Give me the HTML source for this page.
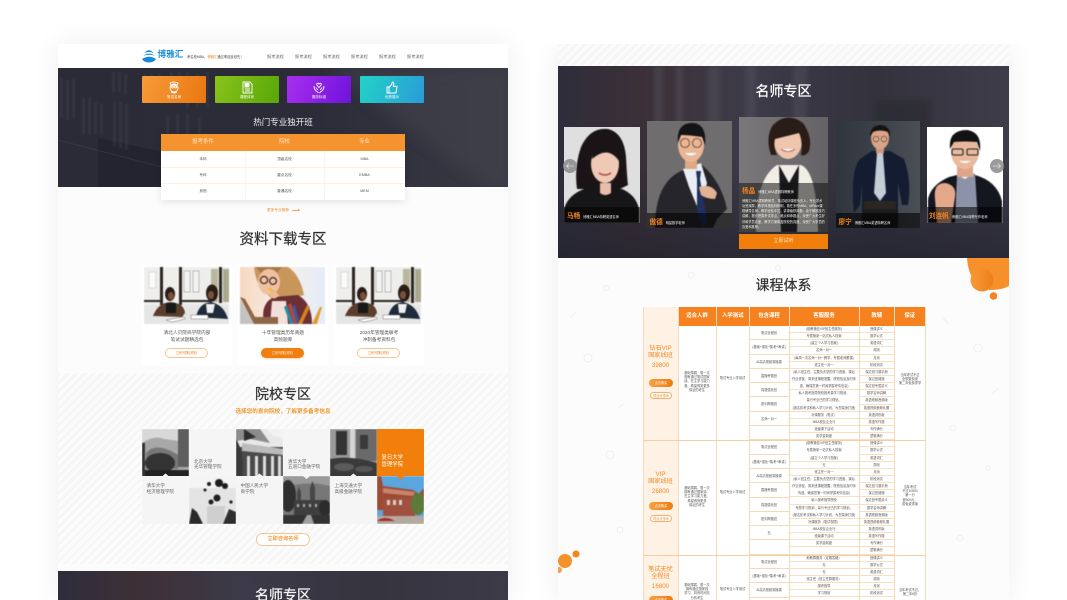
<!DOCTYPE html>
<html lang="zh"><head><meta charset="utf-8"><title>博雅汇</title>
<style>
*{margin:0;padding:0;box-sizing:border-box}
html,body{width:1067px;height:600px;overflow:hidden;background:#fff;font-family:"Liberation Sans","Noto Sans CJK SC",sans-serif;color:#333}
#w{position:relative;width:1067px;height:600px;overflow:hidden;background:#fff;filter:blur(.25px)}
.a{position:absolute;white-space:nowrap}
.c{text-align:center}
svg{position:absolute;display:block}
.ttl{-webkit-text-stroke:.25px currentColor}
.stripe{background:repeating-linear-gradient(135deg,#f6f6f6 0,#f6f6f6 3px,#fcfcfc 3px,#fcfcfc 6px)}
.col{position:absolute;top:326px}
.col div{height:7.15px;line-height:7px;font-size:3.2px;text-align:center;color:#555;white-space:nowrap;overflow:hidden;border-bottom:.5px solid #f8dfc3}
.c4 div{height:14.3px;line-height:14px;border-bottom:1px solid #f6d9b8}
.v{position:absolute;top:307px;width:1px;height:293px;background:#f6d9b8}
.h{position:absolute;left:643px;width:282px;height:1px;background:#f3cfa6}
.th{position:absolute;top:307px;height:19px;line-height:18px;background:#f5821f;color:#fff;font-size:5.4px;font-weight:bold;text-align:center}
.tag{position:absolute;text-align:center;font-size:6.2px;color:#ef8a2a;line-height:8px;white-space:nowrap}
.b1,.b2{position:absolute;left:649px;width:24px;border-radius:5px;text-align:center;font-size:3.2px;white-space:nowrap}
.b1{height:8px;line-height:8px;background:linear-gradient(90deg,#f9a03f,#ee7b12);color:#fff}
.b2{left:650px;width:22px;height:7px;line-height:6px;background:#fff;border:.6px solid #f3b06d;color:#ee8a2a}
.mid{position:absolute;text-align:center;font-size:3.2px;line-height:4.2px;color:#555}
.cell{position:absolute;width:47px;height:47.5px;background:#f5f5f5;font-size:4.6px;line-height:5.8px;color:#666;white-space:nowrap}
.ci{position:absolute;width:47px;height:47.5px;overflow:hidden}
.ci svg,.ph svg,.card svg{filter:blur(.45px)}
.tbar{position:absolute;left:0;right:0;bottom:0;background:rgba(0,0,0,.55);color:#fff;white-space:nowrap}
.tn{color:#f5821f;font-size:6.6px;font-weight:bold}
.td{font-size:3.2px;color:#eee;margin-left:3px}
.ph{position:absolute;overflow:hidden}
.card{position:absolute;top:265px;width:90px;height:100px;background:#fff}
.card p{position:absolute;left:0;width:100%;text-align:center;font-size:4.7px;line-height:7.4px;top:63.5px;color:#555}
.btn{position:absolute;left:23px;top:83px;width:43px;height:10px;border-radius:5px;border:.7px solid #f3c594;background:#fff;color:#ee8a2a;font-size:3.6px;line-height:8.5px;text-align:center}
.ib{position:absolute;top:76px;width:64px;height:27px;border-radius:1px;color:#fff;font-size:3.6px;text-align:center}
.ib span{position:absolute;left:0;right:0;top:19px;line-height:5px}
</style></head>
<body>
<div id="w">

<!-- LEFT PANEL -->
<div class="a" style="left:58px;top:44px;width:450px;height:556px;background:#fcfcfc;box-shadow:0 0 28px rgba(0,0,0,.07)"></div>
<div class="a" style="left:58px;top:44px;width:450px;height:24px;background:#fff"></div>
<svg style="left:142px;top:49px" width="14" height="14" viewBox="0 0 14 14">
<path d="M2.5 4 Q7 -1.5 11.5 4 Q7 2 2.5 4Z" fill="#1689dc"/><path d="M1.2 6.8 Q7 2.5 12.8 6.8 Q7 4.6 1.2 6.8Z" fill="#1689dc"/><path d="M0 10 Q7 5.5 14 10 Q12 13.5 7 13.5 Q2 13.5 0 10Z" fill="#1689dc"/></svg>
<div class="a" style="left:157.5px;top:48px;font-size:8.6px;line-height:12px;font-weight:bold;color:#1b8bdc">博雅汇</div>
<div class="a" style="left:187px;top:55px;font-size:3.3px;line-height:5px;color:#444">考名校MBA，<span style="color:#ef7f16">博雅汇</span>通过率遥遥领先！</div>
<div class="a" style="left:267px;top:53.5px;font-size:4.2px;line-height:5px;color:#666">报考流程</div>
<div class="a" style="left:295px;top:53.5px;font-size:4.2px;line-height:5px;color:#666">报考流程</div>
<div class="a" style="left:323px;top:53.5px;font-size:4.2px;line-height:5px;color:#666">报考流程</div>
<div class="a" style="left:351px;top:53.5px;font-size:4.2px;line-height:5px;color:#666">报考流程</div>
<div class="a" style="left:379px;top:53.5px;font-size:4.2px;line-height:5px;color:#666">报考流程</div>
<div class="a" style="left:407px;top:53.5px;font-size:4.2px;line-height:5px;color:#666">报考流程</div>

<!-- hero -->
<svg style="left:58px;top:68px" width="450" height="119" viewBox="0 0 450 119">
<defs><linearGradient id="hg" x1="0" y1="0" x2="1" y2="0"><stop offset="0" stop-color="#2b2b38"/><stop offset=".55" stop-color="#2c2c39"/><stop offset="1" stop-color="#393944"/></linearGradient>
<filter id="bl"><feGaussianBlur stdDeviation=".8"/></filter><filter id="bl2"><feGaussianBlur stdDeviation="7"/></filter></defs>
<rect width="450" height="119" fill="url(#hg)"/>
<path d="M270 0 L450 0 L450 119 L430 119 Z" fill="#45454f" opacity=".5" filter="url(#bl2)"/>
<path d="M40 70 L270 119 L40 119Z" fill="#23232f" opacity=".8"/>
<g fill="#5a5a66" opacity=".2" filter="url(#bl)">
<rect x="2" y="10" width="3" height="40"/><rect x="8" y="12" width="3" height="40"/><rect x="14" y="10" width="3" height="40"/>
<rect x="24" y="30" width="3" height="36"/><rect x="30" y="30" width="3" height="36"/><rect x="36" y="34" width="3" height="32"/><rect x="42" y="36" width="3" height="30"/>
<rect x="54" y="4" width="3" height="20"/><rect x="60" y="4" width="3" height="20"/><rect x="66" y="6" width="3" height="20"/><rect x="55" y="34" width="3" height="44"/><rect x="61" y="34" width="3" height="46"/><rect x="67" y="36" width="3" height="46"/>
<rect x="86" y="6" width="3" height="26"/><rect x="92" y="6" width="3" height="26"/><rect x="100" y="6" width="3" height="26"/><rect x="112" y="4" width="3" height="30"/><rect x="120" y="4" width="3" height="32"/><rect x="128" y="4" width="3" height="36"/><rect x="138" y="6" width="3" height="34"/><rect x="148" y="4" width="3" height="36"/>
<rect x="108" y="48" width="3" height="24"/><rect x="118" y="46" width="3" height="24"/><rect x="128" y="46" width="3" height="26"/><rect x="140" y="50" width="3" height="24"/>
</g>
<path d="M0 72 L180 119" stroke="#4a4a56" stroke-width="1" opacity=".4"/>
</svg>
<div class="ib" style="left:142px;background:linear-gradient(110deg,#f69b3a,#ea770f)"><span>笔试名师</span></div>
<div class="ib" style="left:215px;background:linear-gradient(110deg,#8ac21b,#58a70a)"><span>课程体系</span></div>
<div class="ib" style="left:287px;background:linear-gradient(110deg,#a82fee,#6f12dc)"><span>服务标准</span></div>
<div class="ib" style="left:360px;background:linear-gradient(110deg,#22d3c6,#2a9bd9)"><span>优势展示</span></div>
<svg style="left:168px;top:81px" width="12" height="13" viewBox="0 0 12 13" fill="none" stroke="#fff" stroke-width=".9"><path d="M2 2 L6 1 L10 2 L9 4 H3Z"/><circle cx="6" cy="7" r="4"/><circle cx="4.4" cy="6" r="1"/><circle cx="7.6" cy="6" r="1"/><path d="M3 11 Q6 13 9 11"/></svg>
<svg style="left:241.5px;top:81px" width="11" height="13" viewBox="0 0 11 13" fill="none" stroke="#fff" stroke-width=".9"><path d="M1 1 H8 L10 3 V12 H1Z"/><rect x="3" y="2.5" width="4" height="3.5" fill="#fff"/><path d="M3 8 H8 M3 10 H8"/></svg>
<svg style="left:313px;top:81px" width="12" height="13" viewBox="0 0 12 13" fill="none" stroke="#fff" stroke-width=".9"><path d="M6 6.5 L3.8 4 Q3.4 2.4 4.8 2.2 Q5.7 2.2 6 3 Q6.3 2.2 7.2 2.2 Q8.6 2.4 8.2 4Z"/><path d="M1 5 Q1 9 4 10.5 L5.5 12 M11 5 Q11 9 8 10.5 L6.5 12"/><path d="M2.8 6.5 L5 9 M9.2 6.5 L7 9"/></svg>
<svg style="left:386px;top:80.5px" width="12" height="13" viewBox="0 0 12 13" fill="none" stroke="#fff" stroke-width="1"><path d="M1 6 H3 V12 H1Z"/><path d="M3 6.4 L5.6 3.6 L6.4 1 Q8 1 7.8 3.2 L7.4 5.4 H11 L10 12 H3"/></svg>

<div class="a c" style="left:161px;width:244px;top:116px;font-size:8.5px;line-height:12px;color:#eee">热门专业独开班</div>
<div class="a" style="left:161px;top:134px;width:244px;height:66px;background:#fff;box-shadow:0 2px 8px rgba(0,0,0,.1)"></div>
<div class="a" style="left:161px;top:134px;width:244px;height:17px;background:#f5942f"></div>
<div class="a c" style="left:161px;width:84px;top:134px;line-height:16px;font-size:5.4px;color:#fce3c6">报考条件</div>
<div class="a c" style="left:245px;width:79px;top:134px;line-height:16px;font-size:5.4px;color:#fce3c6">院校</div>
<div class="a c" style="left:324px;width:81px;top:134px;line-height:16px;font-size:5.4px;color:#fce3c6">专业</div>
<div class="a" style="left:245px;top:151px;width:1px;height:49px;background:#fdf4ea"></div>
<div class="a" style="left:324px;top:151px;width:1px;height:49px;background:#fdf4ea"></div>
<div class="a" style="left:161px;top:167px;width:244px;height:1px;background:#fdf0e2"></div>
<div class="a" style="left:161px;top:183px;width:244px;height:1px;background:#fdf0e2"></div>
<div class="a c" style="left:161px;width:84px;top:157px;font-size:3.7px;line-height:5px;color:#555">本科</div>
<div class="a c" style="left:245px;width:79px;top:157px;font-size:3.7px;line-height:5px;color:#555">顶级名校</div>
<div class="a c" style="left:324px;width:81px;top:157px;font-size:3.7px;line-height:5px;color:#555">MBA</div>
<div class="a c" style="left:161px;width:84px;top:173px;font-size:3.7px;line-height:5px;color:#555">专科</div>
<div class="a c" style="left:245px;width:79px;top:173px;font-size:3.7px;line-height:5px;color:#555">重点名校</div>
<div class="a c" style="left:324px;width:81px;top:173px;font-size:3.7px;line-height:5px;color:#555">EMBA</div>
<div class="a c" style="left:161px;width:84px;top:189px;font-size:3.7px;line-height:5px;color:#555">其他</div>
<div class="a c" style="left:245px;width:79px;top:189px;font-size:3.7px;line-height:5px;color:#555">普通名校</div>
<div class="a c" style="left:324px;width:81px;top:189px;font-size:3.7px;line-height:5px;color:#555">MEM</div>
<div class="a" style="left:267px;top:207.5px;font-size:3.7px;line-height:5px;color:#ef8a2a">更多专业推荐</div>
<svg style="left:291px;top:208px" width="10" height="5" viewBox="0 0 10 5" fill="none" stroke="#ef8a2a" stroke-width=".7"><path d="M1 2.5 H8.5 M7 1 L8.7 2.5"/></svg>

<!-- downloads -->
<div class="a c ttl" style="left:58px;width:450px;top:230px;font-size:14.5px;line-height:20px;color:#333">资料下载专区</div>

<svg width="0" height="0" style="position:absolute"><defs>
<symbol id="meet" viewBox="0 0 85 57">
<rect width="85" height="57" fill="#eeeeec"/>
<rect x="5" y="5" width="7" height="16" fill="#fafafa" stroke="#bbb" stroke-width=".5"/>
<rect x="16" y="0" width="3" height="38" fill="#2b2723"/><rect x="35" y="0" width="3" height="38" fill="#2b2723"/>
<rect x="40" y="4" width="6" height="21" fill="#f3f3f3" stroke="#888" stroke-width=".5"/><rect x="49" y="4" width="6" height="21" fill="#f3f3f3" stroke="#888" stroke-width=".5"/>
<rect x="75" y="0" width="3" height="36" fill="#2b2723"/>
<rect x="67" y="2" width="7" height="33" fill="#b9b79c"/><rect x="79" y="2" width="6" height="33" fill="#a9a98e"/>
<rect x="0" y="33" width="16" height="2" fill="#2b2723"/><rect x="38" y="33" width="30" height="2" fill="#2b2723"/>
<path d="M0 38 H85 V57 H0Z" fill="#e6e6e6"/>
<ellipse cx="26" cy="27" rx="5" ry="7" fill="#2a1c16"/><ellipse cx="27" cy="29" rx="3" ry="4" fill="#7a5238"/>
<path d="M9 49 Q14 36 26 35 Q40 36 41 46 L38 50Z" fill="#5a3d2b"/><path d="M22 36 H32 V46 H22Z" fill="#181818"/>
<ellipse cx="68" cy="26" rx="6" ry="8.5" fill="#2a1c16"/><ellipse cx="67" cy="28" rx="3" ry="4" fill="#7a5238"/>
<path d="M52 50 Q55 36 67 35 Q80 38 84 52Z" fill="#1f2b3a"/><path d="M62 37 H71 L69 46 H63Z" fill="#eee"/>
<path d="M22 53 L40 50 L41 52 L28 55Z" fill="#fff" stroke="#555" stroke-width=".4"/><path d="M47 48 H64 V52 H47Z" fill="#fff" stroke="#555" stroke-width=".4"/>
</symbol>
</defs></svg>

<div class="card" style="left:142px"><svg style="left:2px;top:2px" width="85" height="57"><use href="#meet"/></svg><p>清北人贝院商学院内部<br>笔试试题精选包</p><div class="btn">立即领取资料</div></div>
<div class="card" style="left:238px">
<svg style="left:2px;top:2px" width="85" height="57" viewBox="0 0 85 57">
<defs><linearGradient id="g1" x1="0" x2="1"><stop offset="0" stop-color="#f6d8c0"/><stop offset=".5" stop-color="#f7efe8"/><stop offset="1" stop-color="#e4ecf8"/></linearGradient></defs>
<rect width="85" height="57" fill="url(#g1)"/>
<path d="M14 0 Q16 16 22 22 L36 36 Q56 30 64 28 Q60 8 48 0Z" fill="#c9965a"/>
<path d="M16 0 H42 Q38 6 32 8 L22 8Z" fill="#a87a4a"/>
<ellipse cx="29" cy="15" rx="11" ry="13" fill="#efc1a2"/>
<circle cx="24" cy="13" r="3.6" fill="none" stroke="#2a1a14" stroke-width="1.1"/><circle cx="33" cy="14" r="3.4" fill="none" stroke="#2a1a14" stroke-width="1.1"/>
<path d="M27 22 L41 33 L45 34 L30 20Z" fill="#e9c046"/>
<path d="M24 57 Q20 36 34 30 L58 28 Q72 36 72 57Z" fill="#6b2f34"/>
<path d="M32 34 H46 L48 57 H30Z" fill="#f3dfd9"/>
<ellipse cx="34" cy="28" rx="4" ry="3.5" fill="#eeb999"/>
<path d="M0 32 L14 57 H0Z" fill="#c3c3c3"/><path d="M5 32 L15 50 H38 V57 H14 L0 30Z" fill="#8f6647"/>
<path d="M47 38 L54 57 H50 L44 40Z" fill="#2c8a9e"/><path d="M51 36 L58 57 H54 L48 38Z" fill="#c04242"/><path d="M55 38 L60 57 H57 L52 40Z" fill="#355da2"/><path d="M70 40 L62 57 H58 L67 38Z" fill="#d6821e"/>
<path d="M72 57 L80 40 H82 L77 57Z" fill="#e09a2a"/>
</svg>
<p>十年管理类历年真题<br>高频题库</p><div class="btn" style="background:#f07f0f;border-color:#f07f0f;color:#fde6cc;box-shadow:0 1px 2px rgba(240,127,15,.3)">立即领取资料</div></div>
<div class="card" style="left:334px"><svg style="left:2px;top:2px" width="85" height="57"><use href="#meet"/></svg><p>2020年管理类联考<br>冲刺备考资料包</p><div class="btn">立即领取资料</div></div>

<!-- schools -->
<div class="a stripe" style="left:58px;top:373px;width:450px;height:191px"></div>
<div class="a c ttl" style="left:58px;width:450px;top:384px;font-size:14px;line-height:20px;color:#333">院校专区</div>
<div class="a c" style="left:58px;width:450px;top:408px;font-size:5.6px;line-height:8px;font-weight:bold;color:#ee9a30">选择您的意向院校，了解更多备考信息</div>

<div class="cell" style="left:189px;top:428.5px"><div class="a" style="left:5px;top:30px">北京大学<br>光华管理学院</div></div>
<div class="cell" style="left:283px;top:428.5px"><div class="a" style="left:5px;top:30px">清华大学<br>五道口金融学院</div></div>
<div class="cell" style="left:377px;top:428.5px;background:#f27f0a;color:#fff;font-size:5.4px;line-height:7px"><div class="a" style="left:4.5px;top:26.5px">复日大学<br>管理学院</div></div>
<div class="cell" style="left:142px;top:476px"><div class="a" style="left:4.5px;top:7px">清华大学<br>经济管理学院</div></div>
<div class="cell" style="left:236px;top:476px"><div class="a" style="left:4.5px;top:7px">中国人民大学<br>商学院</div></div>
<div class="cell" style="left:330px;top:476px"><div class="a" style="left:4.5px;top:7px">上海交通大学<br>高级金融学院</div></div>

<div class="ci" style="left:142px;top:428.5px"><svg width="47" height="48" viewBox="0 0 47 48"><rect width="47" height="48" fill="#a8a8a8"/><path d="M0 14 Q12 6 22 10 L36 12 V0 H0Z" fill="#d8d8d8"/><path d="M4 24 Q14 12 36 26 V40 H4Z" fill="#777"/><ellipse cx="18" cy="34" rx="15" ry="10" fill="#333"/><rect x="36" y="0" width="11" height="38" fill="#5e5e5e"/><rect y="41" width="47" height="7" fill="#222"/><path d="M0 14 H3 V48 H0Z" fill="#333"/></svg></div>
<div class="ci" style="left:236px;top:428.5px"><svg width="47" height="48" viewBox="0 0 47 48"><rect width="47" height="48" fill="#e8e8e8"/><path d="M0 0 H24 L34 14 L14 10 L0 12Z" fill="#8c8c8c"/><path d="M30 0 H47 V10 L36 6Z" fill="#f2f2f2"/><path d="M8 0 L20 8 L8 12Z" fill="#2f2f2f"/><rect y="18" width="47" height="30" fill="#4a4a4a"/><path d="M6 14 L47 20 V26 L6 22Z" fill="#bbb"/><g fill="#dcdcdc"><rect x="11" y="27" width="3" height="21"/><rect x="19" y="27" width="3" height="21"/><rect x="27" y="27" width="3" height="21"/><rect x="35" y="27" width="3" height="21"/><rect x="42" y="27" width="3" height="21"/></g><path d="M0 10 Q9 24 6 48 H0Z" fill="#3a3a3a"/></svg></div>
<div class="ci" style="left:330px;top:428.5px"><svg width="47" height="48" viewBox="0 0 47 48"><rect width="47" height="48" fill="#999"/><rect x="6" y="2" width="11" height="24" fill="#333"/><rect x="20" y="0" width="5" height="30" fill="#d5d5d5"/><path d="M26 0 H47 V32 H26Z" fill="#6a6a6a"/><rect x="30" y="6" width="8" height="14" fill="#3a3a3a"/><path d="M0 30 Q20 26 47 34 V48 H0Z" fill="#3a3a3a"/><ellipse cx="14" cy="38" rx="10" ry="4" fill="#5a5a5a"/><ellipse cx="34" cy="40" rx="9" ry="3" fill="#565656"/></svg></div>
<div class="ci" style="left:189px;top:476px"><svg width="47" height="48" viewBox="0 0 47 48"><rect width="47" height="48" fill="#e4e4e4"/><path d="M0 0 H47 V12 H0Z" fill="#f4f4f4"/><g fill="#1e1e1e"><circle cx="30" cy="7" r="4"/><circle cx="36" cy="10" r="3"/><circle cx="20" cy="8" r="2"/><circle cx="28" cy="22" r="3.5"/><circle cx="22" cy="26" r="2.5"/><circle cx="16" cy="14" r="1.5"/><circle cx="42" cy="26" r="1.6"/></g><rect x="18" y="30" width="18" height="18" fill="#cfcfcf"/><path d="M0 48 L3 32 L8 36 L14 48Z" fill="#2a2a2a"/><path d="M34 48 L40 33 L47 36 V48Z" fill="#2f2f2f"/></svg></div>
<div class="ci" style="left:283px;top:476px"><svg width="47" height="48" viewBox="0 0 47 48"><rect width="47" height="48" fill="#777"/><path d="M0 0 H47 V10 Q24 4 0 12Z" fill="#9a9a9a"/><ellipse cx="5" cy="20" rx="8" ry="16" fill="#2f2f2f"/><rect x="11" y="24" width="29" height="15" fill="#3f3f3f"/><path d="M14 24 V16 L16 11 L18 16 V24Z M27 24 V12 L29.5 5 L32 12 V24Z" fill="#474747"/><g fill="#b0b0b0"><rect x="14" y="28" width="2" height="3"/><rect x="20" y="28" width="2" height="3"/><rect x="26" y="28" width="2" height="3"/><rect x="32" y="28" width="2" height="3"/></g><ellipse cx="42" cy="32" rx="6" ry="8" fill="#2c2c2c"/><rect y="39" width="47" height="9" fill="#333"/><path d="M19 48 L24 39 H28 L31 48Z" fill="#a0a0a0"/></svg></div>
<div class="ci" style="left:377px;top:476px"><svg width="47" height="48" viewBox="0 0 47 48"><rect width="47" height="48" fill="#5aa6dd"/><path d="M0 0 H4 L6 10 L36 14 L42 18 L47 12 V34 H0Z" fill="#9e4a35"/><path d="M6 12 L38 16 L36 20 L6 17Z" fill="#c88468"/><rect x="6" y="22" width="32" height="18" fill="#a05040"/><rect x="10" y="24" width="3" height="5" fill="#d8d0c0"/><rect x="16" y="24" width="3" height="5" fill="#d8d0c0"/><rect x="22" y="24" width="3" height="5" fill="#d8d0c0"/><ellipse cx="41" cy="28" rx="7" ry="11" fill="#5c7a3a"/><rect y="40" width="47" height="8" fill="#b5a89c"/><path d="M0 45 Q8 39 18 45Z" fill="#a32a33"/></svg></div>

<svg style="left:142px;top:428px" width="282" height="100" viewBox="0 0 282 100">
<path d="M20.5 48 L23.5 45.5 L26.5 48Z M114.5 48 L117.5 45.5 L120.5 48Z M208.5 48 L211.5 45.5 L214.5 48Z" fill="#fff"/>
<path d="M67 48 L70.5 51 L74 48Z M161 48 L164.5 51 L168 48Z" fill="#f5f5f5"/>
<path d="M255 48 L258.5 52 L262 48Z" fill="#f27f0a"/>
</svg>

<div class="a c" style="left:256px;top:533px;width:54px;height:13px;border:.7px solid #f3c594;border-radius:7px;background:#fff;font-size:5.2px;line-height:11.6px;font-weight:bold;color:#eea044">立即咨询名师</div>

<svg style="left:58px;top:571px" width="450" height="29" viewBox="0 0 450 29">
<defs><linearGradient id="d2" x1="0" x2="1"><stop offset="0" stop-color="#2e2d3c"/><stop offset=".18" stop-color="#3d3036"/><stop offset=".4" stop-color="#3c3a48"/><stop offset=".7" stop-color="#35343f"/><stop offset="1" stop-color="#3c3a47"/></linearGradient></defs>
<rect width="450" height="29" fill="url(#d2)"/></svg>
<div class="a c ttl" style="left:58px;width:450px;top:585px;font-size:14px;line-height:20px;color:#f4f4f4">名师专区</div>

<!-- RIGHT PANEL -->
<div class="a" style="left:558px;top:44px;width:451px;height:556px;background:#fcfcfc;box-shadow:0 0 28px rgba(0,0,0,.07)"></div>
<div class="a" style="left:533px;top:0;width:534px;height:44px;background:#fff"></div>
<div class="a stripe" style="left:558px;top:44px;width:451px;height:22px"></div>

<svg style="left:558px;top:66px" width="451" height="192" viewBox="0 0 451 192">
<defs><linearGradient id="d3" x1="0" x2="1"><stop offset="0" stop-color="#2e2d3c"/><stop offset=".18" stop-color="#3b3036"/><stop offset=".42" stop-color="#3d3b49"/><stop offset=".7" stop-color="#33323d"/><stop offset="1" stop-color="#3e3c49"/></linearGradient>
<linearGradient id="d4" x1="0" y1="0" x2="0" y2="1"><stop offset=".5" stop-color="#23232f" stop-opacity="0"/><stop offset="1" stop-color="#23232f" stop-opacity=".75"/></linearGradient>
<filter id="bl3"><feGaussianBlur stdDeviation="2.5"/></filter></defs>
<rect width="451" height="192" fill="url(#d3)"/>
<g fill="#55535f" opacity=".45" filter="url(#bl3)"><rect x="96" y="0" width="9" height="140"/><rect x="118" y="0" width="7" height="150"/><rect x="150" y="0" width="12" height="120"/><rect x="188" y="0" width="10" height="100"/><rect x="235" y="0" width="14" height="80"/></g>
<rect x="318" y="34" width="55" height="110" fill="#2b2a33" opacity=".6" filter="url(#bl3)"/>
<rect width="451" height="192" fill="url(#d4)"/></svg>
<div class="a c ttl" style="left:558px;width:451px;top:81px;font-size:14px;line-height:20px;color:#fff">名师专区</div>

<!-- teachers -->
<div class="ph" style="left:564px;top:127px;width:76px;height:96px;background:#dfdfdf">
<svg width="76" height="96" viewBox="0 0 76 96"><path d="M0 96 V82 Q4 68 20 62 H58 Q72 68 75 82 V96Z" fill="#161619"/><path d="M13 62 Q10 40 17 20 Q26 0 44 2 Q60 6 62 30 Q63 50 64 58 L56 62 H20Z" fill="#1a1416"/><ellipse cx="41" cy="37" rx="14" ry="19" fill="#efc8b6"/><path d="M28 32 Q30 12 52 18 Q56 28 55 34 Q44 18 28 32Z" fill="#1a1416"/><path d="M36 56 H47 V66 Q41 70 36 66Z" fill="#e8bda9"/><path d="M35 46 Q41 50 47 46" stroke="#b3474c" stroke-width="1.4" fill="none"/></svg>
<div class="tbar" style="height:16px;line-height:14px;background:rgba(0,0,0,.5);padding-left:3px"><span class="tn">马畅</span><span class="td">博雅汇MBA特聘英语名师</span></div></div>

<div class="ph" style="left:647px;top:121px;width:85px;height:107px;background:#6f6d6d">
<svg width="85" height="107" viewBox="0 0 85 107"><path d="M8 107 Q8 62 34 50 L55 44 Q74 60 80 88 L70 98 L66 107Z" fill="#26262a"/><path d="M36 48 L54 42 L60 62 L52 90 L42 66Z" fill="#e8eef4"/><path d="M49 50 L54 50 L53 58 L60 100 L56 107 L50 90 L50 58Z" fill="#20305f"/><path d="M52 66 Q64 62 70 72 L68 78 Q60 78 54 74Z" fill="#e2b393"/><rect x="38" y="36" width="12" height="12" fill="#dfa988"/><ellipse cx="44" cy="24" rx="13" ry="17" fill="#e9b696"/><path d="M31 22 Q29 1 47 2 Q60 4 58 24 L55 16 Q42 14 34 14Z" fill="#141416"/><circle cx="38" cy="22" r="4.5" fill="none" stroke="#5a3a2a" stroke-width=".8"/><circle cx="50" cy="22" r="4.5" fill="none" stroke="#5a3a2a" stroke-width=".8"/><path d="M38 32 Q44 37 50 32" fill="#fff"/></svg>
<div class="tbar" style="height:15px;line-height:14px;background:rgba(0,0,0,.55);padding-left:2.5px"><span class="tn">傲德</span><span class="td">明星数学老师</span></div></div>

<div class="ph" style="left:739px;top:117px;width:89px;height:115px;background:linear-gradient(90deg,#7a787a,#646264)">
<svg width="89" height="115" viewBox="0 0 89 115"><path d="M17 115 Q16 62 38 48 H62 Q78 54 79 115Z" fill="#f1eee6"/><path d="M40 48 L50 66 L60 48 L58 115 H42Z" fill="#1a1a1e"/><ellipse cx="49" cy="24" rx="14" ry="18" fill="#efc5ad"/><path d="M32 38 Q26 20 34 8 Q48 -6 64 6 Q74 20 70 34 Q66 40 62 38 Q64 24 60 16 Q44 20 36 22 Q34 30 38 38Z" fill="#2a1c16"/><path d="M42 32 Q49 37 56 32" fill="#fff" stroke="#b84a52" stroke-width=".8"/></svg>
<div class="tbar" style="height:49px;background:rgba(20,20,20,.55);padding:1px 3px"><div style="line-height:9px"><span class="tn">杨晶</span><span class="td">博雅汇MBA逻辑特聘教师</span></div><div style="font-size:3.2px;line-height:5.3px;color:#eee;white-space:normal;margin-top:1.5px">博雅汇MBA逻辑教研员、笔试培训课程负责人，专业学术功底深厚，教学风格独特鲜明，曾任多所MBA、MPAcc课程辅导名师，教学经验丰富，讲课幽默风趣，善于解题技巧讲解，擅长把握考试重点、难点和命题点，深受广大考生好评和学员喜爱，教学方案覆盖院校的真题，深受广大学员的喜爱和推荐。</div></div></div>
<div class="a c" style="left:739px;top:234px;width:89px;height:15px;background:#f27f0a;color:#fde3c5;font-size:5px;line-height:14px">立即试听</div>

<div class="ph" style="left:836px;top:121px;width:84px;height:107px;background:linear-gradient(90deg,#2f353d,#4a4f56)">
<svg width="84" height="107" viewBox="0 0 84 107"><path d="M18 92 Q14 50 24 38 L36 30 H54 L68 38 Q76 60 72 84 L66 84 L62 62 V107 H26 V62 L24 84Z" fill="#131c30"/><path d="M41 32 L47 32 L50 72 L44 80 L38 72Z" fill="#c4ccd6"/><path d="M28 80 H60 V90 H28Z" fill="#2c2622"/><rect x="26" y="88" width="36" height="19" fill="#1c1c1e"/><rect x="40" y="26" width="8" height="6" fill="#cc9678"/><ellipse cx="44" cy="17" rx="9" ry="11.5" fill="#d9a488"/><path d="M34 16 Q34 4 45 4 Q55 5 54 16 L52 11 Q44 8 37 11Z" fill="#17120f"/><circle cx="40" cy="18" r="2.8" fill="none" stroke="#5a4030" stroke-width=".6"/><circle cx="48" cy="18" r="2.8" fill="none" stroke="#5a4030" stroke-width=".6"/></svg>
<div class="tbar" style="height:15px;line-height:14px;background:rgba(0,0,0,.6);padding-left:2.5px"><span class="tn">廖宁</span><span class="td">博雅汇MBA英语特聘名师</span></div></div>

<div class="ph" style="left:927px;top:127px;width:76px;height:96px;background:#fff">
<svg width="76" height="96" viewBox="0 0 76 96"><path d="M1 96 V72 Q4 58 22 50 L30 48 L38 58 L48 48 Q70 54 75 74 V96Z" fill="#15171f"/><path d="M30 48 L38 52 L48 46 L51 96 H28Z" fill="#8c93a8"/><path d="M8 72 Q6 56 18 56 Q30 58 28 70 L24 96 H10Z" fill="#e3a98a"/><rect x="30" y="36" width="16" height="14" fill="#dda688"/><ellipse cx="38" cy="25" rx="14" ry="17" fill="#eab99c"/><path d="M23 22 Q21 3 40 3 Q55 5 53 24 L50 15 Q38 14 27 15Z" fill="#121214"/><rect x="25" y="22" width="11" height="6" rx="1.5" fill="none" stroke="#222" stroke-width="1.1"/><rect x="40" y="22" width="11" height="6" rx="1.5" fill="none" stroke="#222" stroke-width="1.1"/><path d="M32 34 Q38 38 44 34" fill="#fff"/></svg>
<div class="tbar" style="height:16px;line-height:14px;background:rgba(0,0,0,.55);padding-left:2px"><span class="tn">刘连帆</span><span class="td">博雅汇MBA特聘写作老师</span></div></div>

<svg style="left:563px;top:159px" width="14" height="14" viewBox="0 0 14 14"><circle cx="7" cy="7" r="7" fill="#8a8a8a" fill-opacity=".85"/><path d="M11 7 H3.5 M6 4.5 L3.5 7 L6 9.5" stroke="#ddd" stroke-width=".8" fill="none"/></svg>
<svg style="left:990px;top:159px" width="14" height="14" viewBox="0 0 14 14"><circle cx="7" cy="7" r="7" fill="#8a8a8a" fill-opacity=".85"/><path d="M3 7 H10.5 M8 4.5 L10.5 7 L8 9.5" stroke="#ddd" stroke-width=".8" fill="none"/></svg>

<!-- decoration -->
<svg style="left:558px;top:258px" width="451" height="342" viewBox="0 0 451 342">
<defs><linearGradient id="og" x1="0" x2="1"><stop offset="0" stop-color="#f79a38"/><stop offset="1" stop-color="#ee7f16"/></linearGradient></defs>
<g fill="none" stroke="#ececec" stroke-width=".8"><circle cx="133" cy="17" r="3"/><circle cx="48" cy="30" r="2.5"/><circle cx="30" cy="100" r="4"/><circle cx="93" cy="210" r="2.5"/><circle cx="52" cy="197" r="4"/><circle cx="62" cy="272" r="3"/><circle cx="395" cy="170" r="3"/><circle cx="420" cy="90" r="4"/><circle cx="402" cy="280" r="3"/><circle cx="430" cy="210" r="2.5"/><circle cx="220" cy="10" r="2.5"/><path d="M12 60 L18 54 M440 130 L434 136 M60 150 L66 146 M385 60 L391 66"/></g>
<path d="M409 0 Q411 28 432 32 Q444 32 451 28 V0Z" fill="#f6902b"/>
<circle cx="424" cy="22" r="11.5" fill="url(#og)"/>
<circle cx="435.5" cy="38" r="3.8" fill="#ef8420"/>
<circle cx="7" cy="303" r="7" fill="#f6922c"/><circle cx="18" cy="296" r="3.6" fill="#f08a20"/><circle cx="1" cy="312" r="3" fill="#f3a04f"/>
</svg>

<div class="a c ttl" style="left:558px;width:451px;top:275px;font-size:14px;line-height:20px;color:#333">课程体系</div>

<!-- table -->
<div class="a" style="left:643px;top:307px;width:282px;height:293px;background:#fff"></div>
<div class="a" style="left:643px;top:307px;width:35px;height:293px;background:#fef2e4"></div>
<div class="th" style="left:678px;width:38px">适合人群</div>
<div class="th" style="left:716.5px;width:32.5px">入学测试</div>
<div class="th" style="left:749.5px;width:39px">包含课程</div>
<div class="th" style="left:789px;width:70px">客服服务</div>
<div class="th" style="left:859.5px;width:34.5px">教辅</div>
<div class="th" style="left:894.5px;width:30.5px">保证</div>

<div class="col c4" style="left:749px;width:40px">
<div>笔试全程班</div><div>(基础+强化+集考+串讲)</div><div>AI高清视频录播课</div><div>直播夸题班</div><div>真题强化班</div><div>密训押题班</div><div>名师一对一</div><div></div>
<div>笔试全程班</div><div>(基础+强化+集考+串讲)</div><div>AI高清视频录播课</div><div>直播夸题班</div><div>真题强化班</div><div>密训押题班</div><div>无</div><div></div>
<div>笔试全程班</div><div>(基础+强化+集考+串讲)</div><div>AI高清视频录播课</div>
</div>
<div class="col" style="left:789px;width:70px">
<div>(助教微信VIP班主任服务)</div><div>专属管家一站式私人档案</div><div>(建立个人学习档案)</div><div>名师一对一</div><div>(每周一次名师一对一教学，专属老师跟课)</div><div>班主任一对一</div><div style="border:0">(私人班主任，主要负责您的学习进度、课后</div><div style="border:0">作业督促、周末班课程提醒、院校信息及时传</div><div>递、确保您第一时间掌握考情信息)</div><div style="border:0">私人报考指导院校报考量学习规划、</div><div style="border:0">量行专业已的学习规划。</div><div>(报名阶考试和私人学习计划、为您量身打造)</div><div>补课服务（笔试）</div><div>MBA校友企业行</div><div>班级课下活动</div><div>奖学金制度</div>
<div style="border:0">(助教微信VIP班主任服务)</div><div style="border:0">专属管家一站式私人档案</div><div>(建立个人学习档案)</div><div>无</div><div>班主任一对一</div><div style="border:0">(私人班主任，主要负责您的学习进度、课后</div><div style="border:0">作业督促、周末班课程提醒、院校信息及时传</div><div>传递、确保您第一时间掌握考情信息)</div><div>私人报考指导院校</div><div style="border:0">专属学习规划、量行专业已的学习规划。</div><div>(报名阶考试和私人学习计划、为您量身打造)</div><div>补课服务（笔试权限）</div><div>MBA校友企业行</div><div>班级课下活动</div><div>奖学金制度</div><div></div>
<div>助教群服务（定期答疑）</div><div>无</div><div>无</div><div>班主任（班主任群服务）</div><div>报考指导</div><div>学习规划</div>
</div>
<div class="col" style="left:859px;width:35px">
<div>授课讲义</div><div>数学公式</div><div>英语词汇</div><div>周测</div><div>月测</div><div>阶段测试</div><div>保过班习题手册</div><div>保过班错题</div><div>保过班专属讲义</div><div>数学名师讲解</div><div>英语视频音频版</div><div>英语视频音频礼赠</div><div>英语词形版</div><div>英语写作题</div><div>写作满分</div><div>逻辑满分</div>
<div>授课讲义</div><div>数学公式</div><div>英语词汇</div><div>周测</div><div>月测</div><div>阶段测试</div><div>保过班习题手册</div><div>保过班错题</div><div>保过班专属讲义</div><div>数学名师讲解</div><div>英语视频音频版</div><div>英语视频音频礼赠</div><div>英语词形版</div><div>英语写作题</div><div>写作满分</div><div>逻辑满分</div>
<div>授课讲义</div><div>数学公式</div><div>英语词汇</div><div>周测</div><div>月测</div><div>阶段测试</div>
</div>

<div class="v" style="left:643px"></div><div class="v" style="left:678px"></div><div class="v" style="left:716px"></div><div class="v" style="left:749px"></div><div class="v" style="left:789px"></div><div class="v" style="left:859px"></div><div class="v" style="left:894px"></div><div class="v" style="left:925px"></div>
<div class="h" style="top:440px"></div><div class="h" style="top:555px"></div>

<div class="tag" style="left:643px;width:35px;top:345px;line-height:7.4px">钻石VIP<br>国家线班<div style="margin-top:2px">39800</div></div>
<div class="b1" style="top:379px">点击购买</div><div class="b2" style="top:392px">项目优惠申</div>
<div class="tag" style="left:643px;width:35px;top:471px;line-height:7.4px">VIP<br>国家线班<div style="margin-top:2px">26800</div></div>
<div class="b1" style="top:502px">点击购买</div><div class="b2" style="top:515px">项目优惠申</div>
<div class="tag" style="left:643px;width:35px;top:566px;line-height:7.4px">笔试无忧<br>全程班<div style="margin-top:2px">16800</div></div>
<div class="b1" style="top:596px">点击购买</div>

<div class="mid" style="left:681px;width:32px;top:371px">基础薄弱、想一次<br>拥有通过笔试国家<br>线、在主学习能力<br>差、希望得到更多<br>保证的考生</div>
<div class="a c" style="left:716px;width:33px;top:376px;font-size:3.2px;line-height:5px;color:#555">笔试专业入学测试</div>
<div class="mid" style="left:681px;width:32px;top:486px">基础薄弱、想一次<br>拥有通过国家线、<br>在主学习能力差、<br>希望得到更多<br>保证的考生</div>
<div class="a c" style="left:716px;width:33px;top:490px;font-size:3.2px;line-height:5px;color:#555">笔试专业入学测试</div>
<div class="mid" style="left:681px;width:32px;top:583px">基础薄弱、想一次<br>拥有通过国家线<br>学习、具有时间充<br>分的考生</div>
<div class="a c" style="left:716px;width:33px;top:587px;font-size:3.2px;line-height:5px;color:#555">笔试专业入学测试</div>
<div class="mid" style="left:895px;width:30px;top:373px">当年考试不过<br>全额退费或<br>第二年免费重学</div>
<div class="mid" style="left:895px;width:30px;top:485px">当年考试<br>不过10850<br>第一分<br>退500元，<br>或免费重读</div>
<div class="mid" style="left:895px;width:30px;top:588px">当年考试不过，<br>第二年6折</div>

</div>
</body></html>
